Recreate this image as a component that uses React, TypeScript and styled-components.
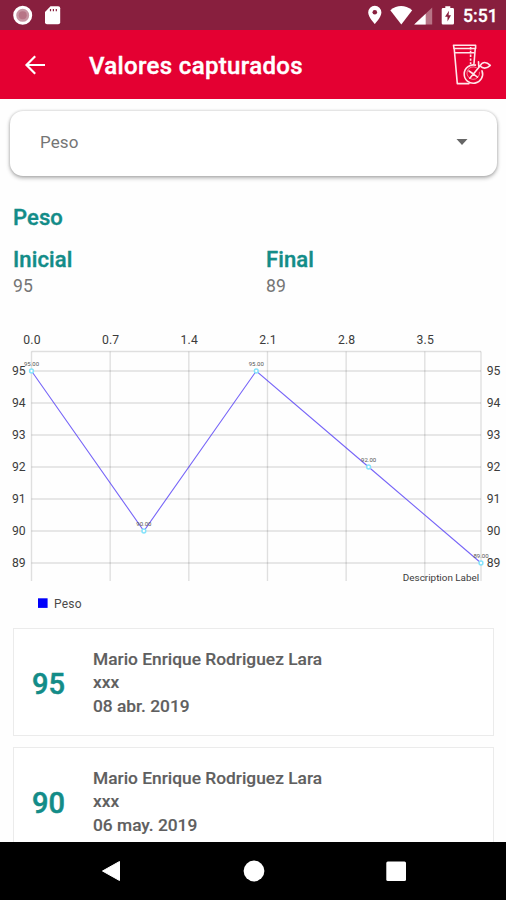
import React from "react";
import styled, { createGlobalStyle } from "styled-components";

const GlobalStyle = createGlobalStyle`
  * { box-sizing: border-box; }
  body { margin: 0; background: #fefefe; font-family: Roboto, "Liberation Sans", sans-serif; }
`;

const Screen = styled.div`
  width: 506px;
  height: 900px;
  display: flex;
  flex-direction: column;
  overflow: hidden;
  background: #fefefe;
`;

const StatusBar = styled.header`
  flex: none;
  height: 30px;
  display: flex;
  justify-content: space-between;
  background: #881f3e;
`;

const StatusIcons = styled.svg`
  display: block;
`;

const StatusRight = styled.div`
  display: flex;
  align-items: center;
`;

const Clock = styled.span`
  width: 43px;
  padding-top: 2px;
  color: #fff;
  font-size: 17.6px;
  font-weight: 500;
  line-height: 22px;
  white-space: nowrap;
  -webkit-text-stroke: 0.3px #fff;
`;

const AppBar = styled.div`
  flex: none;
  height: 69px;
  display: flex;
  align-items: center;
  padding: 0 13px 0 23px;
  background: #e40032;
`;

const Title = styled.h1`
  flex: 1;
  margin: 0 0 0 42px;
  color: #fff;
  font-size: 24px;
  font-weight: 500;
  letter-spacing: 0.34px;
  line-height: 32px;
  padding-top: 2px;
  -webkit-text-stroke: 0.4px #fff;
`;

const Content = styled.main`
  flex: 1;
  min-height: 0;
  overflow: hidden;
  padding: 12px 12px 0 13px;
`;

const Select = styled.div`
  height: 65px;
  margin: 0 -3px 0 -3px;
  padding: 0 29px 3px 30px;
  display: flex;
  align-items: center;
  justify-content: space-between;
  border-radius: 13px;
  background: #fff;
  color: #757575;
  font-size: 17px;
  letter-spacing: 0.1px;
  box-shadow: 0 2px 4px rgba(0, 0, 0, 0.3), 0 0 3px rgba(0, 0, 0, 0.18);
`;

const Heading = styled.h2`
  margin: 0;
  color: #138c88;
  font-size: 22px;
  font-weight: 500;
  letter-spacing: 0.12px;
  line-height: 26px;
  -webkit-text-stroke: 0.4px #138c88;
`;

const Section = styled.section`
  padding-top: 29px;
`;

const Summary = styled.div`
  display: grid;
  grid-template-columns: 253px 1fr;
  padding-top: 16px;
`;

const SummaryValue = styled.div`
  color: #757575;
  font-size: 17.6px;
  line-height: 26px;
`;

const Chart = styled.svg`
  display: block;
  margin: 23px -12px 0 -13px;
  font-family: Roboto, sans-serif;
`;

const Card = styled.article`
  height: 108px;
  margin-bottom: 11px;
  padding-top: 2px;
  display: flex;
  align-items: center;
  border: 1px solid #ebebeb;
  background: #fff;
`;

const CardValue = styled.div`
  width: 79px;
  padding: 1px 0 0 18px;
  color: #138c88;
  font-size: 29px;
  font-weight: 500;
  -webkit-text-stroke: 0.5px #138c88;
`;

const CardText = styled.div`
  color: #5f5f5f;
  font-size: 17.35px;
  font-weight: 500;
  line-height: 23.3px;
  -webkit-text-stroke: 0.15px #5f5f5f;
`;

const NavBar = styled.nav`
  flex: none;
  height: 58px;
  display: flex;
  align-items: center;
  justify-content: space-between;
  padding: 0 99px 1px 100px;
  background: #000;
`;

const X0 = 31.5;
const X1 = 481;
const TOP = 29.5;
const BOTTOM = 259;
const xAt = (v: number) => X0 + ((X1 - X0) / 4) * v;
const yAt = (v: number) => 49 + (95 - v) * 32;
const points = [95, 90, 95, 92, 89];
const xTicks = [0, 0.7, 1.4, 2.1, 2.8, 3.5];
const yTicks = [95, 94, 93, 92, 91, 90, 89];

const WeightChart = () => (
  <Chart width="506" height="306" viewBox="0 0 506 306">
    <g stroke="#000" strokeOpacity="0.12" strokeWidth="1.4">
      {xTicks.map((t) => (
        <line key={t} x1={xAt(t)} x2={xAt(t)} y1={TOP} y2={BOTTOM} />
      ))}
      <line x1={X1} x2={X1} y1={TOP} y2={BOTTOM} />
      <line x1={X0} x2={X1} y1={TOP} y2={TOP} />
      {yTicks.map((t) => (
        <line key={t} x1={X0} x2={X1} y1={yAt(t)} y2={yAt(t)} />
      ))}
    </g>
    <polyline
      points={points.map((p, i) => `${xAt(i)},${yAt(p)}`).join(" ")}
      fill="none"
      stroke="#4a32f5"
      strokeOpacity="0.75"
      strokeWidth="1.1"
    />
    <g fill="#3c3c3c" fontSize="12.2">
      {xTicks.map((t) => (
        <text key={t} x={xAt(t) + 0.5} y="22" textAnchor="middle" letterSpacing="0.2">
          {t.toFixed(1)}
        </text>
      ))}
      {yTicks.map((t) => (
        <React.Fragment key={t}>
          <text x="25.7" y={yAt(t) + 4} textAnchor="end">{t}</text>
          <text x="486.7" y={yAt(t) + 4}>{t}</text>
        </React.Fragment>
      ))}
    </g>
    <text x="479.2" y="258.5" textAnchor="end" fontSize="9.9" fill="#3c3c3c">
      Description Label
    </text>
    {points.map((p, i) => (
      <g key={i}>
        <text x={xAt(i)} y={yAt(p) - 5} textAnchor="middle" fontSize="6" fill="#555">
          {p.toFixed(2)}
        </text>
        <circle cx={xAt(i)} cy={yAt(p)} r="1.9" fill="#fff" stroke="#86e3fb" strokeWidth="1.5" />
      </g>
    ))}
    <rect x="38" y="276.3" width="9.6" height="9.6" fill="#0000fa" />
    <text x="54" y="286" fontSize="12" letterSpacing="0.2" fill="#4a4a4a">Peso</text>
  </Chart>
);

const JuiceIcon = () => (
  <svg width="42" height="46" viewBox="451 42 42 46" fill="none" stroke="#ffe6ea" strokeWidth="1.6" strokeLinecap="round" strokeLinejoin="round">
    <path d="M453.5 45.2H475.6V48.5H454Z" />
    <path d="M454.2 48.5 457.3 83.6H469" />
    <path d="M455 52.7H474" />
    <path d="M475.2 49 474 63.5" />
    <path d="M470.6 47v17" strokeDasharray="2.4 1.4" strokeLinecap="butt" />
    <path d="M475.4 65.1A9.2 9.2 0 1 0 482 70.8" />
    <path d="M476.4 67.6A6.3 6.3 0 1 0 479.5 72.2" strokeWidth="0.8" strokeOpacity="0.7" />
    <path d="M473.4 74 480.4 65.5M473.4 74l-4.4-3M473.4 74l-3.6 4.2M473.4 74l4 3.2" />
    <path d="M480 66C482.5 61 486.7 62 490.3 65.3 487 68.4 483 68.8 480 66ZM478.8 66.8l-.3-5" />
  </svg>
);

const records = [
  { value: 95, name: "Mario Enrique Rodriguez Lara", note: "xxx", date: "08 abr. 2019" },
  { value: 90, name: "Mario Enrique Rodriguez Lara", note: "xxx", date: "06 may. 2019" },
];

export default function App() {
  return (
    <Screen>
      <GlobalStyle />
      <StatusBar>
        <StatusIcons width="80" height="30" viewBox="0 0 80 30">
          <circle cx="22.7" cy="15.3" r="8" fill="#c795a3" stroke="#fff" strokeWidth="3" />
          <circle cx="22.7" cy="15.3" r="4" fill="#b77486" />
          <path d="M50.5 6.3h7.7a2 2 0 0 1 2 2v14a2 2 0 0 1-2 2H47a2 2 0 0 1-2-2V12z" fill="#fff" />
          <path d="M50.5 9v2.2M53.4 9v2.2M56.3 9v2.2" stroke="#881f3e" strokeWidth="1.2" />
        </StatusIcons>
        <StatusRight>
          <StatusIcons width="97" height="30" viewBox="366 0 97 30">
            <path d="M374.8 5.8a6.6 6.6 0 0 0-6.6 6.6c0 4.7 6.6 11.5 6.6 11.5s6.6-6.8 6.6-11.5a6.6 6.6 0 0 0-6.6-6.6Z" fill="#fff" />
            <circle cx="374.8" cy="12.3" r="2.3" fill="#881f3e" />
            <path d="M390.3 10.2Q401 1.8 412.2 10.2L401.3 24.4Z" fill="#fff" />
            <path d="M432.2 7.5V24.6H414.2Z" fill="#b77486" />
            <path d="M425.7 13.7V24.6H414.2Z" fill="#fff" />
            <path d="M445.3 6.2h5v1.9h2.4a1.3 1.3 0 0 1 1.3 1.3v13.9a1.3 1.3 0 0 1-1.3 1.3h-9.7a1.3 1.3 0 0 1-1.3-1.3V9.4a1.3 1.3 0 0 1 1.3-1.3h2.3z" fill="#fff" />
            <path d="M449 10.7 445 16.8h2.500v4.600l3.500-6.200H448.600Z" fill="#881f3e" />
          </StatusIcons>
          <Clock>5:51</Clock>
        </StatusRight>
      </StatusBar>
      <AppBar>
        <svg width="24" height="24" viewBox="0 0 24 24" fill="none" stroke="#fff" strokeWidth="2.2">
          <path d="M22 12H4M12.2 3.3 3.5 12l8.700 8.700" />
        </svg>
        <Title>Valores capturados</Title>
        <JuiceIcon />
      </AppBar>
      <Content>
        <Select>
          <span>Peso</span>
          <svg width="12" height="6" viewBox="0 0 12 6">
            <path d="M0.500 0h11L6 6z" fill="#666" />
          </svg>
        </Select>
        <Section>
          <Heading>Peso</Heading>
          <Summary>
            <div>
              <Heading>Inicial</Heading>
              <SummaryValue>95</SummaryValue>
            </div>
            <div>
              <Heading>Final</Heading>
              <SummaryValue>89</SummaryValue>
            </div>
          </Summary>
        </Section>
        <WeightChart />
        {records.map((r) => (
          <Card key={r.value}>
            <CardValue>{r.value}</CardValue>
            <CardText>
              <div>{r.name}</div>
              <div>{r.note}</div>
              <div>{r.date}</div>
            </CardText>
          </Card>
        ))}
      </Content>
      <NavBar>
        <svg width="22" height="22" viewBox="0 0 22 22">
          <path d="M19.500 1.500V20.500L2.500 11Z" fill="#fff" stroke="#fff" strokeWidth="1" strokeLinejoin="round" />
        </svg>
        <svg width="22" height="22" viewBox="0 0 22 22">
          <circle cx="11" cy="11" r="10.400" fill="#fff" />
        </svg>
        <svg width="22" height="22" viewBox="0 0 22 22">
          <rect x="1.300" y="1.500" width="19.700" height="19.500" rx="1.500" fill="#fff" />
        </svg>
      </NavBar>
    </Screen>
  );
}
